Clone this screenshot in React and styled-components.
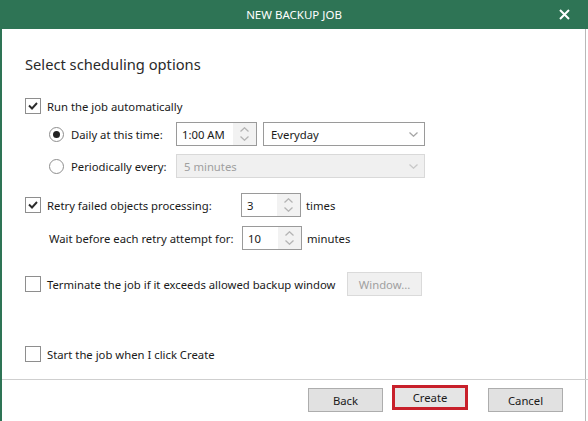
import React from 'react';
import styled, { createGlobalStyle } from 'styled-components';

const GlobalStyle = createGlobalStyle`
  html, body {
    margin: 0;
    padding: 0;
    background: #fff;
  }
  body {
    font-family: "Segoe UI", "Noto Sans", sans-serif;
    font-size: 11.3px;
    color: #1a1a1a;
  }
`;

const Window = styled.div`
  width: 588px;
  height: 421px;
  display: flex;
  flex-direction: column;
  overflow: hidden;
`;

const TitleBar = styled.div`
  height: 29px;
  flex: none;
  background: #2e7455;
  color: #fff;
  display: flex;
  align-items: center;
  justify-content: center;
  position: relative;
  font-size: 11.5px;
`;

const CloseButton = styled.button`
  position: absolute;
  right: 18px;
  top: 9px;
  width: 11px;
  height: 11px;
  padding: 0;
  border: 0;
  background: none;
  display: flex;
`;

const Frame = styled.div`
  flex: 1;
  display: flex;
  flex-direction: column;
  border-left: 2px solid #2e7455;
  margin-right: 2px;
  border-right: 1px solid #b8b8b8;
`;

const Body = styled.div`
  height: 350px;
  padding: 25px 0 0 23px;
  box-sizing: border-box;
`;

const Heading = styled.div`
  font-size: 14.7px;
  line-height: 20px;
  height: 20px;
  margin-bottom: 20px;
  color: #2a2a2a;
`;

const Row = styled.div`
  display: flex;
  align-items: center;
  height: 24px;
  margin-top: ${({gap}) => gap || 0}px;
  padding-left: ${({indent}) => indent || 0}px;
`;

const Box = styled.span`
  width: 14px;
  height: 14px;
  border: 1px solid #8e8e8e;
  background: #fff;
  display: flex;
  align-items: center;
  justify-content: center;
  flex: none;
  margin-right: 6px;
`;

const Radio = styled.span`
  width: 13px;
  height: 13px;
  border: 1px solid #8e8e8e;
  border-radius: 50%;
  display: flex;
  align-items: center;
  justify-content: center;
  flex: none;
  margin-right: 7px;

  &::after {
    content: '';
    display: ${({checked}) => checked ? 'block' : 'none'};
    width: 7px;
    height: 7px;
    border-radius: 50%;
    background: #222;
  }
`;

const Label = styled.span`
  white-space: nowrap;
  width: ${({width}) => width ? width + 'px' : 'auto'};
  flex: none;
`;

const Field = styled.div`
  height: 24px;
  box-sizing: border-box;
  width: ${({width}) => width}px;
  border: 1px solid ${({disabled}) => disabled ? '#d9d9d9' : '#9a9a9a'};
  background: ${({disabled}) => disabled ? '#f0f0f0' : '#fff'};
  color: ${({disabled}) => disabled ? '#a0a0a0' : '#1a1a1a'};
  display: flex;
  align-items: center;
  flex: none;
  margin-left: ${({gap}) => gap || 0}px;
`;

const FieldText = styled.span`
  flex: 1;
  padding-left: ${({pad}) => pad}px;
  white-space: nowrap;
`;

const Spin = styled.span`
  width: 23px;
  align-self: stretch;
  background: #f2f2f2;
  display: flex;
  flex-direction: column;
  align-items: center;
  justify-content: center;
  gap: 4px;
`;

const Caret = styled.span`
  width: 22px;
  display: flex;
  justify-content: center;
`;

const Unit = styled.span`
  margin-left: 5px;
`;

const PlainButton = styled.button`
  font: inherit;
  height: 24px;
  width: 75px;
  box-sizing: border-box;
  border: 1px solid ${({disabled}) => disabled ? '#dadada' : '#adadad'};
  background: ${({disabled}) => disabled ? '#f0f0f0' : '#e1e1e1'};
  color: ${({disabled}) => disabled ? '#a0a0a0' : '#1a1a1a'};
  padding: 0;
  margin-left: ${({gap}) => gap || 0}px;
  flex: none;
`;

const Footer = styled.div`
  flex: 1;
  border-top: 1px solid #cfcfcf;
  margin-right: -3px;
  display: flex;
  justify-content: flex-end;
  align-items: flex-start;
  padding: 8px 25px 0 0;
  gap: 9px;
`;

const Highlight = styled.span`
  display: flex;
  border: 3px solid #c8202b;
  margin: -3px 11px 0 0;
`;

const CreateButton = styled(PlainButton)`
  width: 70px;
  height: 19px;
  border: none;
  background: #e5e5e5;
`;

function Check({checked}) {
  return (
    <Box>
      {checked && (
        <svg width="10" height="8" viewBox="0 0 10 8">
          <polyline points="1,3.5 4,6.5 9,1" fill="none" stroke="#2b2b2b" strokeWidth="1.9" />
        </svg>
      )}
    </Box>
  );
}

function Chevron({up, color}) {
  return (
    <svg width="9" height="5" viewBox="0 0 9 5">
      <polyline
        points={up ? '0.5,4.5 4.5,0.8 8.5,4.5' : '0.5,0.5 4.5,4.2 8.5,0.5'}
        fill="none"
        stroke={color || '#b4b4b4'}
        strokeWidth="1.3"
      />
    </svg>
  );
}

function Spinner({value, width}) {
  return (
    <Field width={width}>
      <FieldText pad={5}>{value}</FieldText>
      <Spin>
        <Chevron up />
        <Chevron />
      </Spin>
    </Field>
  );
}

function Select({value, width, disabled, gap}) {
  return (
    <Field width={width} disabled={disabled} gap={gap}>
      <FieldText pad={7}>{value}</FieldText>
      <Caret>
        <Chevron color={disabled ? '#c8c8c8' : '#a6a6a6'} />
      </Caret>
    </Field>
  );
}

export default function App() {
  return (
    <Window>
      <GlobalStyle />
      <TitleBar>
        NEW BACKUP JOB
        <CloseButton>
          <svg width="11" height="11" viewBox="0 0 11 11">
            <path d="M1 1 L10 10 M10 1 L1 10" stroke="#fff" strokeWidth="2" />
          </svg>
        </CloseButton>
      </TitleBar>
      <Frame>
        <Body>
          <Heading>Select scheduling options</Heading>

          <Row>
            <Check checked />
            <Label>Run the job automatically</Label>
          </Row>
          <Row gap={4} indent={24}>
            <Radio checked />
            <Label width={105}>Daily at this time:</Label>
            <Spinner value="1:00 AM" width={81} />
            <Select value="Everyday" width={162} gap={6} />
          </Row>
          <Row gap={8} indent={24}>
            <Radio />
            <Label width={105}>Periodically every:</Label>
            <Select value="5 minutes" width={249} disabled />
          </Row>

          <Row gap={15}>
            <Check checked />
            <Label width={194}>Retry failed objects processing:</Label>
            <Spinner value="3" width={60} />
            <Unit>times</Unit>
          </Row>
          <Row gap={9} indent={24}>
            <Label width={193}>Wait before each retry attempt for:</Label>
            <Spinner value="10" width={60} />
            <Unit>minutes</Unit>
          </Row>

          <Row gap={22}>
            <Check />
            <Label width={300}>Terminate the job if it exceeds allowed backup window</Label>
            <PlainButton disabled>Window...</PlainButton>
          </Row>

          <Row gap={46}>
            <Check />
            <Label>Start the job when I click Create</Label>
          </Row>
        </Body>
        <Footer>
          <PlainButton>Back</PlainButton>
          <Highlight>
            <CreateButton>Create</CreateButton>
          </Highlight>
          <PlainButton>Cancel</PlainButton>
        </Footer>
      </Frame>
    </Window>
  );
}
